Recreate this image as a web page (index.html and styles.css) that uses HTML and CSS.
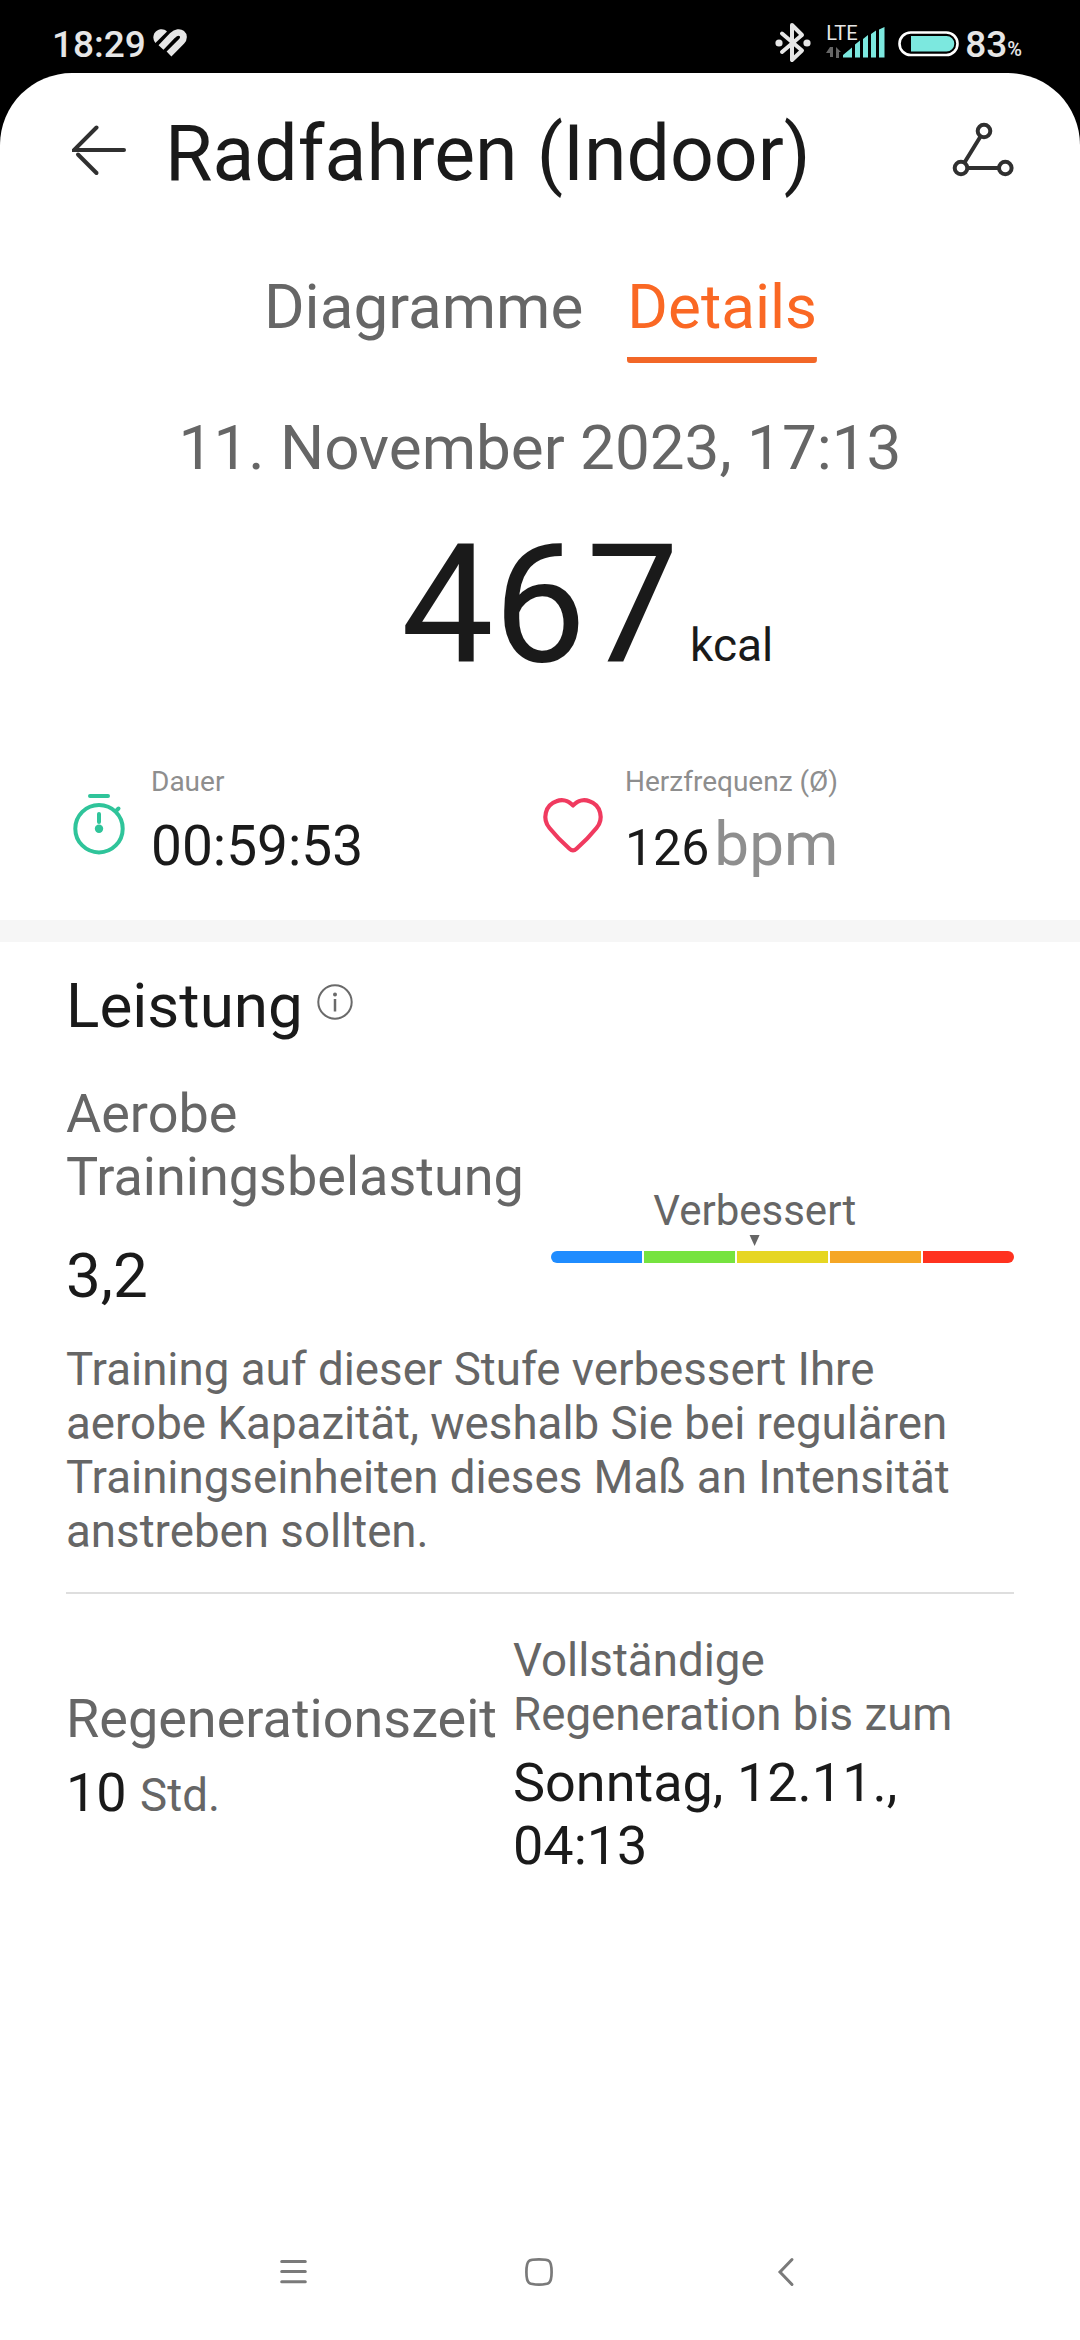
FILE: index.html
```html
<!DOCTYPE html>
<html lang="de">
<head>
<meta charset="utf-8">
<title>Radfahren (Indoor)</title>
<link rel="stylesheet" href="styles.css">
</head>
<body>
<div class="status">
  <div class="status-left">
    <span class="clock">18:29</span>
    <svg class="fit" width="36" height="32" viewBox="0 0 36 32"><path d="M2.400 15C-1.500 10 .5 3 6.500 1.500C9.500 .8 12 1.600 14 3.400Z" fill="#e6e6e6"/><path d="M8 19.500L19.500 7.500C27 .5 34 7.500 28.500 13.500L16 26" fill="none" stroke="#e6e6e6" stroke-width="6.800"/></svg>
  </div>
  <div class="status-right">
    <svg class="bt" width="36" height="40" viewBox="0 0 36 40"><path d="M7 10.500 L27 27.500 L17 37 V2 L27 12 L7 29" fill="none" stroke="#e6e6e6" stroke-width="4" stroke-linejoin="round" stroke-linecap="round"/><circle cx="4" cy="20" r="3.600" fill="#e6e6e6"/><circle cx="32" cy="20" r="3.600" fill="#e6e6e6"/></svg>
    <div class="signal">
      <span class="lte">LTE</span>
      <svg width="60" height="34" viewBox="0 0 60 34"><path d="M4 21h3v10H4v-4H0zM10 32V21l5 5h-2v6z" fill="#666"/><path d="M17 31.500V29L26 21.500V31.500zM29 31.500V18.500L34 14.500V31.500zM37 31.500V13L42 9V31.500zM45 31.500V8L50 4.500V31.500zM53 31.500V3.500L58.500 1V31.500z" fill="#7ce8df"/></svg>
    </div>
    <svg class="battery" width="62" height="26" viewBox="0 0 62 26"><rect x="1.500" y="1.500" width="58" height="22.500" rx="11.200" fill="none" stroke="#fff" stroke-width="2.600"/><path d="M13 5H48.500a7.800 7.800 0 0 1 0 15.600H13z" fill="#7ce8df"/></svg>
    <span class="level">83</span><span class="percent">%</span>
  </div>
</div>
<main class="screen">
  <header class="header">
    <svg class="back" width="56" height="54" viewBox="0 0 56 54" fill="none" stroke="#303030" stroke-width="4" stroke-linecap="round"><path d="M52 27H2L24.500 4.500"/><path d="M6 31.500L24.500 50" /></svg>
    <h1 class="title">Radfahren (Indoor)</h1>
    <svg class="route" width="62" height="56" viewBox="0 0 62 56" fill="none" stroke="#303030" stroke-width="4"><circle cx="32" cy="10" r="6.300"/><circle cx="9" cy="47" r="6.300"/><circle cx="53.300" cy="47" r="6.300"/><path d="M28.500 15.500L12.500 41.500M15.500 47H47"/></svg>
  </header>
  <nav class="tabs">
    <span class="tab">Diagramme</span>
    <span class="tab active">Details</span>
  </nav>
  <p class="date">11. November 2023, 17:13</p>
  <div class="energy"><span class="energy-value">467</span><span class="energy-unit">kcal</span></div>
  <section class="stats">
    <div class="stat">
      <svg width="66" height="66" viewBox="0 0 66 66" fill="none" stroke="#2fc49a" stroke-width="4" stroke-linecap="round"><circle cx="33" cy="36.700" r="23.700"/><path d="M24 4H42M50 19l2.500-2.500M33 22v8" /><circle cx="33" cy="36.800" r="4.200" fill="#2fc49a" stroke="none"/></svg>
      <div><div class="stat-label">Dauer</div><div class="stat-value"><span class="time">00:59:53</span></div></div>
    </div>
    <div class="stat">
      <svg width="66" height="66" viewBox="0 0 66 66" fill="none" stroke="#f03a5f" stroke-width="4.200" stroke-linejoin="round"><path d="M33 13.500C28 7.500 21 7.500 16.500 9.200C5 13 2 27 9.500 36C15.500 43.500 23 51 29.500 56.800Q33 60 36.500 56.800C43 51 50.500 43.500 56.500 36C64 27 61 13 49.500 9.200C45 7.500 38 7.500 33 13.500Z"/></svg>
      <div><div class="stat-label">Herzfrequenz (Ø)</div><div class="stat-value"><span class="rate">126</span><span class="bpm">bpm</span></div></div>
    </div>
  </section>
  <div class="band"></div>
  <section class="performance">
    <div class="heading"><h2>Leistung</h2>
      <svg width="36" height="36" viewBox="0 0 36 36"><circle cx="18" cy="18" r="16.700" fill="none" stroke="#6a6a6a" stroke-width="2"/><circle cx="18" cy="10.500" r="2" fill="#6a6a6a"/><path d="M18 15V27.500" stroke="#6a6a6a" stroke-width="2.500"/></svg>
    </div>
    <div class="load">
      <div class="load-text">
        <div class="metric">Aerobe Trainingsbelastung</div>
        <div class="load-value">3,2</div>
      </div>
      <div class="scale">
        <div class="marker"><span>Verbessert</span><i class="pointer"></i></div>
        <div class="bars"><i class="blue"></i><i class="green"></i><i class="yellow"></i><i class="orange"></i><i class="red"></i></div>
      </div>
    </div>
    <p class="advice">Training auf dieser Stufe verbessert Ihre<br>aerobe Kapazität, weshalb Sie bei regulären<br>Trainingseinheiten dieses Maß an Intensität<br>anstreben sollten.</p>
    <div class="recovery">
      <div class="recovery-time">
        <div class="metric">Regenerationszeit</div>
        <div class="hours">10 <small>Std.</small></div>
      </div>
      <div class="recovery-until">
        <div class="until-label">Vollständige<br>Regeneration bis zum</div>
        <div class="until-date">Sonntag, 12.11.,<br>04:13</div>
      </div>
    </div>
  </section>
  <footer class="keys">
    <svg width="32" height="32" viewBox="0 0 32 32" fill="none" stroke="#7a7a7a" stroke-width="3" stroke-linecap="round"><path d="M3.700 5.500H27.300M3.700 15.500H27.300M3.700 25.700H27.300"/></svg>
    <svg class="home" width="32" height="32" viewBox="0 0 32 32" fill="none" stroke="#7a7a7a" stroke-width="2.700"><path d="M16 3.400C26 3.400 28.600 3.600 28.600 16C28.600 28 26 28.600 16 28.600C6 28.600 3.400 28 3.400 16C3.400 3.600 6 3.400 16 3.400Z"/></svg>
    <svg width="32" height="32" viewBox="0 0 32 32" fill="none" stroke="#7a7a7a" stroke-width="3" stroke-linecap="round"><path d="M22 3.500L10 16L22 28.500"/></svg>
  </footer>
</main>
</body>
</html>
```
FILE: styles.css
```css
* { box-sizing: border-box; margin: 0; padding: 0; }
body {
  width: 1080px;
  height: 2340px;
  display: flex;
  flex-direction: column;
  background: #000;
  color: #1a1a1a;
  font-family: Roboto, sans-serif;
  overflow: hidden;
}
svg { display: block; flex: none; }
h1, h2 { font-weight: 400; }

.status {
  height: 73px;
  padding: 0 58px 0 52px;
  display: flex;
  justify-content: space-between;
  color: #e6e6e6;
}
.status-left, .status-right { display: flex; align-items: flex-start; }
.clock, .level { font-size: 37px; font-weight: 500; line-height: 43px; margin-top: 23px; }
.fit { margin: 28px 0 0 7px; }
.bt { margin: 23px 15px 0 0; }
.signal { display: grid; margin-right: 12px; }
.signal > * { grid-area: 1 / 1; }
.lte { font-size: 20px; line-height: 24px; margin-top: 21px; }
.signal svg { margin-top: 26px; }
.battery { margin: 31px 5px 0 0; }
.percent { font-size: 20px; font-weight: 500; line-height: 24px; margin-top: 37px; }

.screen {
  flex: 1;
  display: flex;
  flex-direction: column;
  background: #fff;
  border-radius: 72px 72px 0 0;
}
.header { display: flex; padding: 36px 66px 0 72px; }
.back { margin: 14px 37px 0 0; }
.title { flex: 1; font-size: 77px; line-height: 90px; }
.route { margin-top: 12px; }

.tabs { display: flex; justify-content: center; gap: 44px; margin-top: 71px; padding-left: 1px; font-size: 62px; line-height: 73px; color: #666; }
.tab { padding-bottom: 20px; }
.active { color: #fa6824; background: linear-gradient(#f26728, #f26728) bottom / 100% 6px no-repeat; border-radius: 3px; }
.date { margin-top: 48px; text-align: center; font-size: 62px; line-height: 73px; color: #666; }
.energy { height: 193px; margin-top: 24px; display: grid; grid-template-columns: 1fr auto 1fr; align-items: baseline; }
.energy-value { grid-column: 2; font-size: 165px; line-height: 193px; }
.energy-unit { font-size: 46px; margin-left: 11px; }

.stats { display: grid; grid-template-columns: 1fr 1fr; height: 219px; padding: 64px 66px 0; }
.stat { display: flex; gap: 19px; }
.stat svg { margin-top: 27px; }
.stat-label { font-size: 28px; line-height: 33px; color: #8e8e8e; }
.stat-value { font-size: 62px; line-height: 73px; margin-top: 9px; white-space: nowrap; }
.stat-value span { line-height: 1; }
.time { font-size: 55px; }
.rate { font-size: 50px; }
.bpm { color: #8e8e8e; margin-left: 5px; }
.band { height: 22px; background: #f6f6f6; }

.performance { padding: 27px 66px 0; }
.heading { display: flex; gap: 14px; }
.heading h2 { font-size: 62px; line-height: 73px; }
.heading svg { margin-top: 15px; }
.load { display: grid; grid-template-columns: 485px 1fr; margin-top: 40px; }
.metric { font-size: 54px; line-height: 63px; color: #666; }
.load-value { font-size: 62px; line-height: 73px; margin-top: 31px; }
.scale { margin-top: 104px; }
.marker { width: fit-content; margin-left: 44%; transform: translateX(-50%); display: flex; flex-direction: column; align-items: center; font-size: 42px; line-height: 49px; color: #666; }
.pointer { border: 5.5px solid transparent; border-top: 11px solid #666; border-bottom: 0; }
.bars { display: grid; grid-template-columns: repeat(5, 1fr); gap: 2.4px; height: 12px; margin-top: 5px; border-radius: 6px; overflow: hidden; }
.blue { background: #1f8cff; }
.green { background: #76e33f; }
.yellow { background: #e6d622; }
.orange { background: #f5a626; }
.red { background: #ff321f; }
.advice { margin-top: 31px; padding-bottom: 33px; border-bottom: 2px solid #dedede; font-size: 45.7px; line-height: 54px; color: #666; white-space: nowrap; }
.recovery { display: grid; grid-template-columns: 447px 1fr; align-items: center; margin-top: 39px; }
.hours { height: 63px; margin-top: 11px; font-size: 54px; line-height: 63px; }
.hours small { font-size: 45.7px; line-height: 1; color: #666; }
.until-label { padding-top: 1px; font-size: 45.7px; line-height: 54px; color: #666; }
.until-date { margin-top: 9px; font-size: 54px; line-height: 63px; }

.keys { margin-top: auto; padding: 0 278px 52px; display: flex; justify-content: space-between; }
.home { margin-right: 3px; }
```
